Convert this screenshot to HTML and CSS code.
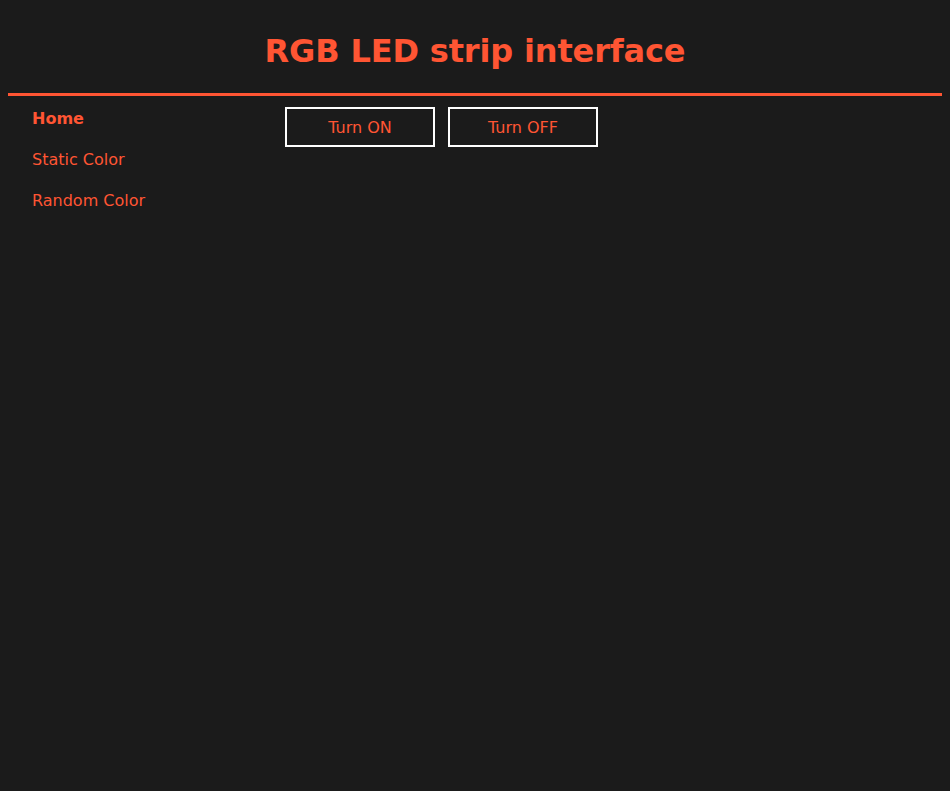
FILE: index.html
```html
<!DOCTYPE html>
<html>
<head>
<meta charset="utf-8">
<link rel="stylesheet" href="styles.css">
</head>
<body>
<header class="header">
  <h1 class="title">RGB LED strip interface</h1>
</header>
<div class="layout">
  <nav class="sidebar">
    <a class="nav-link active" href="#">Home</a>
    <a class="nav-link" href="#">Static Color</a>
    <a class="nav-link" href="#">Random Color</a>
  </nav>
  <main class="main">
    <button class="btn">Turn ON</button>
    <button class="btn">Turn OFF</button>
  </main>
</div>
</body>
</html>
```
FILE: styles.css
```css
html, body {
  background: #1b1b1b;
}
body {
  margin: 8px;
  font-family: "DejaVu Sans", Tahoma, sans-serif;
  color: #ff5533;
}
.header {
  border-bottom: 3px solid #ff5533;
  height: 85px;
  display: flex;
  align-items: center;
  justify-content: center;
}
.title {
  margin: 0;
  font-size: 32px;
  font-weight: bold;
  color: #ff5533;
  padding-top: 0;
  letter-spacing: -0.15px;
}
.layout {
  display: grid;
  grid-template-columns: 277px 1fr;
}
.sidebar {
  display: flex;
  flex-direction: column;
  padding-left: 24px;
  padding-top: 13px;
}
.nav-link {
  color: #ff5533;
  text-decoration: none;
  font-size: 16px;
  line-height: 19px;
  height: 41px;
}
.nav-link.active {
  font-weight: bold;
}
.main {
  display: flex;
  gap: 13px;
  padding-top: 11px;
}
.btn {
  width: 150px;
  height: 40px;
  background: #1b1b1b;
  border: 2px solid #ffffff;
  color: #ff5533;
  font-family: "DejaVu Sans", Tahoma, sans-serif;
  font-size: 16px;
  padding: 0;
}
```
